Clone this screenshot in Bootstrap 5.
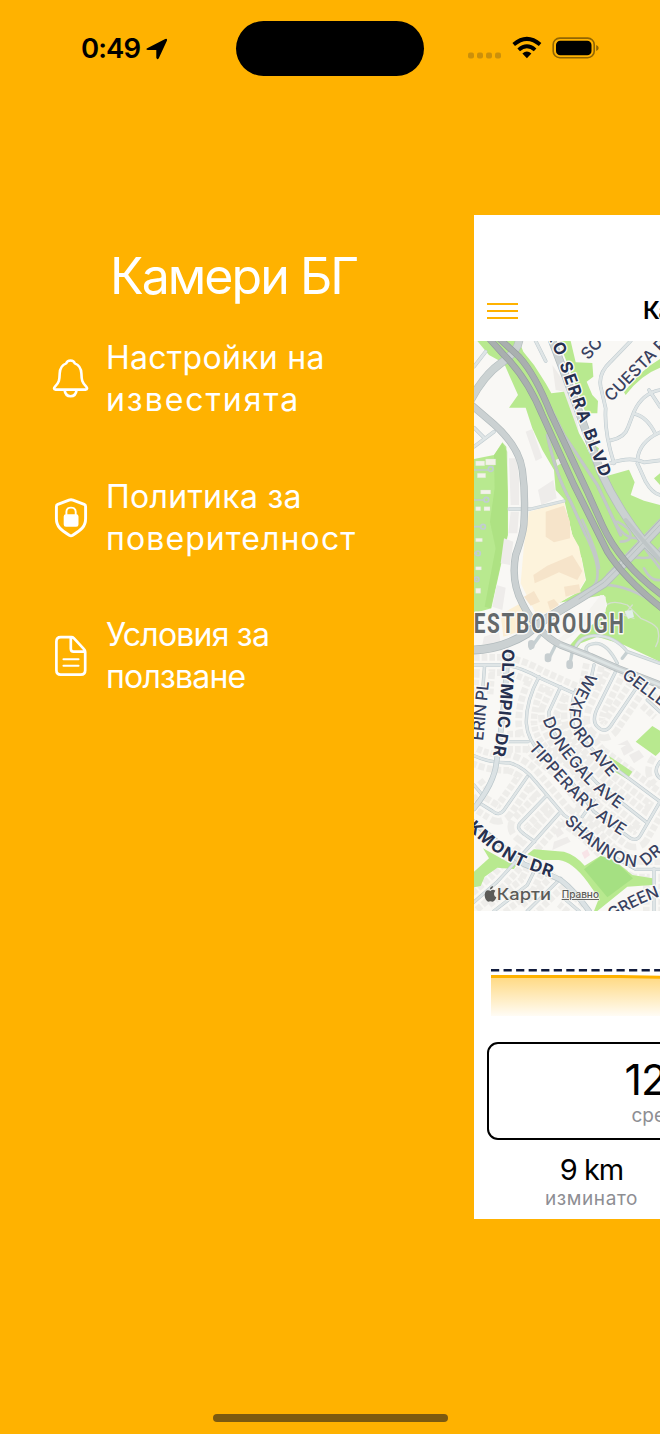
<!DOCTYPE html>
<html lang="bg">
<head>
<meta charset="utf-8">
<meta name="viewport" content="width=device-width, initial-scale=1">
<title>Камери БГ</title>
<link href="https://cdn.jsdelivr.net/npm/bootstrap@5.3.0/dist/css/bootstrap.min.css" rel="stylesheet">
<style>
html,body{height:1434px;overflow:hidden}
body{background:#ffb200;font-family:Inter,"Liberation Sans",sans-serif;color:#000}
.phone{width:660px;height:1434px}
.status{height:215px;padding:21px 61px 0 81px}
.status-row{height:55px}
.clock{font-size:27.5px;font-weight:600;line-height:57px;width:60px;flex:none;letter-spacing:-.9px}
.island{width:188px;height:55px;border-radius:28px;background:#000;margin-left:67px;flex:none}
.side{width:474px;padding:36px 0 0 51px}
.brand{font-size:50px;line-height:50px;padding-left:59px;letter-spacing:-1.95px;margin-bottom:36px}
.entry{gap:15px;height:84px;margin-bottom:54.5px;font-size:32px;line-height:42px}
.entry svg{width:40px;height:44px;flex:none;fill:none;stroke:#fff;stroke-width:2.6;stroke-linecap:round;stroke-linejoin:round}
.ls-a{letter-spacing:.28px}
.ls-b{letter-spacing:1.95px}
.ls-c{letter-spacing:1.1px}
.ls-d{letter-spacing:-.8px}
.stage{width:186px;height:1004px}
.bar-top{height:126px;padding:87px 0 0 12.5px}
.heading{font-size:24px;font-weight:600;line-height:18px;margin-left:125.5px;letter-spacing:-1.5px}
.map-area{height:570px}
.map-area>svg{display:block}
.chart{height:131px;padding-top:55px;padding-left:16px}
.metric{width:436px;height:98px;margin-left:12.5px;border:2px solid #000;border-radius:11px;padding:14px 0 0 136px}
.big{font-size:43px;line-height:42px;letter-spacing:-1px}
.note{font-size:19px;line-height:24px;color:#8e8e93;letter-spacing:.6px}
.metric .note{padding:4px 0 0 7px;letter-spacing:0}
.trip{width:231px;padding-top:12px;padding-left:4px}
.trip .note{line-height:22px}
.dist{font-size:29px;line-height:36px;letter-spacing:-1px}
.home-line{width:235px;height:8px;border-radius:4px;background:#7c5a10;margin-bottom:12px}
.r{fill:none;stroke-linejoin:round;stroke-linecap:round}
.lb text{font-size:49px;font-weight:500;fill:#384160;stroke:#faf9f7;stroke-width:8;paint-order:stroke;stroke-linejoin:round}
.lb text.hv{font-size:50px;font-weight:700;fill:#26304f}
</style>
</head>
<body>
<div class="phone d-flex flex-column overflow-hidden">
  <header class="status">
    <div class="status-row d-flex align-items-center">
      <span class="clock text-nowrap">0:49</span>
      <svg width="24" height="24" viewBox="0 0 24 24" class="ms-1 flex-shrink-0"><path d="M2.2 11.3 20.2 2Q22.6 1.2 22 3.6L13.8 21.2Q12.2 23.4 11.3 20.8V13H3Q.2 12.6 2.2 11.3Z"/></svg>
      <div class="island"></div>
      <svg width="134" height="30" viewBox="0 0 134 30" class="flex-shrink-0" style="margin-left:43px">
        <g fill="#cb900a"><rect x="1" y="18.5" width="6" height="6" rx="2"/><rect x="10" y="18.5" width="6" height="6" rx="2"/><rect x="19" y="18.5" width="6" height="6" rx="2"/><rect x="28" y="18.5" width="6" height="6" rx="2"/></g>
        <g transform="translate(.7 1.4)">
        <g fill="none" stroke="#000" stroke-width="3.9"><path d="M46 9.2Q59.2-2.2 72.4 9.2"/><path d="M51 14.5Q59.2 7.3 67.4 14.5"/></g>
        <path d="M54.7 18.2Q59.2 14 63.7 18.2L59.2 22.8Z"/>
        <rect x="85.5" y="2.7" width="41" height="19.6" rx="6.5" fill="none" stroke="#916503" stroke-width="1.6"/>
        <rect x="88.3" y="5.3" width="35.5" height="14.5" rx="4.3"/>
        <path d="M128.5 9.5Q131 10.5 131 12.5T128.5 15.6Z" fill="#916503"/>
        </g>
      </svg>
    </div>
  </header>
  <main class="d-flex">
    <nav class="side text-white">
      <div class="brand">Камери БГ</div>
      <div class="entry d-flex align-items-center">
        <svg viewBox="0 0 40 44"><path d="M19.5 3.5C17.3 3.5 15.7 4.8 15.2 6.4 11 8 8.9 11.6 8.7 16.5 8.5 23 8.2 25.2 4.2 29.4 2.5 31.2 2.7 32.6 4.6 32.6H34.6C36.4 32.6 36.6 31.2 35 29.4 31 25.2 30.6 23 30.4 16.5 30.2 11.6 28 8 23.8 6.4 23.3 4.8 21.7 3.5 19.5 3.5ZM13.6 33Q14.3 39.2 19.6 39.2T25.6 33"/></svg>
        <div><span class="ls-a">Настройки на</span><br><span class="ls-b">известията</span></div>
      </div>
      <div class="entry d-flex align-items-center">
        <svg viewBox="0 0 40 44"><path d="M18 4.2 6.8 8.4Q5.4 9 5.4 10.6V22.5C5.4 31 10 34 18.3 39.2Q20 40.2 21.7 39.2C30 34 34.6 31 34.6 22.5V10.6Q34.6 9 33.2 8.4L22 4.2Q20 3.4 18 4.2Z" stroke-width="2.9"/><rect x="14" y="19.5" width="12.2" height="10" rx="1" fill="#fff"/><path d="M15.4 19V15.7Q15.6 11.6 20 11.6T24.7 15.7V19" stroke-width="1.9"/></svg>
        <div><span class="ls-a">Политика за</span><br><span class="ls-c">поверителност</span></div>
      </div>
      <div class="entry d-flex align-items-center">
        <svg viewBox="0 0 40 44"><path d="M20.4 3.2H9.8Q5.4 3.2 5.4 7.6V36.3Q5.4 40.7 9.8 40.7H29.8Q34.2 40.7 34.2 36.3V18Q34.2 16.4 33 15.2L22.8 4.2Q21.8 3.2 20.4 3.2ZM19.8 3.8V14.7Q19.8 17.6 22.7 17.6H33.6" stroke-width="2.7"/><path d="M12.5 25.2H27.5M12.5 31.7H27.5" stroke-width="2.1"/></svg>
        <div><span class="ls-d">Условия за</span><br><span class="ls-d">ползване</span></div>
      </div>
    </nav>
    <section class="stage bg-white overflow-hidden">
      <div class="bar-top d-flex align-items-start">
        <svg width="31" height="18" viewBox="0 0 31 18" class="flex-shrink-0"><path d="M0 1.9H31M0 8.9H31M0 15.9H31" stroke="#ffb200" stroke-width="2"/></svg>
        <div class="heading text-nowrap">Камери</div>
      </div>
      <div class="map-area">
        <svg width="186" height="570" viewBox="30 18 558 1710">
          <defs>
            <g id="lanes">
              <path d="M30 990H110Q160 990 230 1030L330 1075M225 1025Q185 1100 187 1165 190 1215 235 1260L300 1310 345 1370 390 1430 500 1510Q520 1520 530 1500L588 1400M290 1055 255 1130Q250 1190 335 1275L400 1345 545 1460M335 1065Q310 1140 335 1185L400 1260 588 1400M460 1000 405 1110Q380 1155 400 1175 425 1200 445 1165L530 1040M130 1220H192M30 1262Q80 1285 135 1283 180 1295 215 1340L300 1440 370 1490 440 1560 515 1603H588M190 1325 120 1425Q105 1445 85 1428L40 1400M245 1385 168 1465Q155 1480 180 1497L212 1520M290 1430 210 1520 100 1640 20 1710M30 1350 55 1380M355 1445 390 1395M570 1600V1728M90 1728 190 1650 215 1600M190 1728 290 1630M345 1728 300 1690M62 990 55 1080M390 990 375 1060M588 1280Q565 1310 588 1330M550 1095 588 1130"/>
            </g>
            <g id="hills">
              <path d="M500 18 440 80Q402 115 410 155L425 220Q420 290 450 385M440 316Q482 308 492 277L510 230Q535 175 588 165M510 236Q550 245 575 298M520 375Q525 320 588 292M440 384Q500 363 540 382L588 376M520 385 545 440Q565 475 588 480M555 165 588 215M215 18 245 78M30 95 65 50M30 335 90 290M30 278 60 308"/>
            </g>
            <path id="west" d="M20 208 90 268Q165 335 175 405T180 560Q180 590 155 660 140 740 175 805 220 895 290 930L380 965 460 1000 588 1050"/>
            <path id="junip" d="M20 945Q110 945 190 895L240 855 340 795 420 745 500 665 600 560"/>
            <path id="fwyA" d="M75 10 120 60Q190 130 235 240L330 450 385 560 430 650Q480 730 600 825"/>
            <path id="fwyB" d="M105 10 165 65Q215 120 260 235L370 470 415 570Q470 690 600 785"/>
            <path id="serra" d="M262 10 330 190 410 410Q460 520 540 620L600 680"/>
            <path id="p1" d="M263 -12 290 45Q320 130 350 215T430 428"/>
            <path id="p2" d="M360 65 440 -25"/>
            <path id="p3" d="M430 190 620 -2"/>
            <path id="p4" d="M133 942Q132 1110 104 1266"/>
            <path id="p5" d="M40 1216 58 1038"/>
            <path id="p6" d="M385 1020Q350 1080 333 1125 325 1165 350 1197L457 1324"/>
            <path id="p7" d="M252 1147Q275 1215 335 1282 380 1345 478 1412"/>
            <path id="p8" d="M205 1228 300 1335Q380 1425 485 1490"/>
            <path id="p9" d="M312 1448Q390 1530 450 1560 505 1588 545 1572L598 1530"/>
            <path id="p10" d="M482 1013 610 1107"/>
            <path id="p11" d="M22 1466Q100 1545 180 1580L275 1612"/>
            <path id="p12" d="M436 1742Q500 1695 610 1658"/>
          </defs>
          <rect x="30" y="18" width="558" height="1710" fill="#f9f8f5"/>
          <g fill="none" stroke="#eeedea">
            <use href="#lanes" stroke-width="66" stroke-dasharray="17 6"/>
            <use href="#lanes" stroke="#f9f8f5" stroke-width="26"/>
          </g>
          <path d="M265 90 320 170 345 290 325 250 300 170 275 165Z" fill="#eeece9"/>
          <g fill="#b8e98f">
            <path d="M40 18H165L178 50 210 90 245 145 262 175 300 170 325 240 345 295 365 330 410 428 495 404 512 442 500 480 540 497 588 510V980L480 930 400 905 350 925 330 950 308 942 345 900 415 845 430 810 420 780 285 803 345 770 366 735 353 670 325 600 300 492 275 465 270 405 235 345 205 280 185 218H135L162 180 120 85 75 60Z"/>
            <path d="M288 18H320L335 82 385 84 388 125 368 140 385 180 402 198 400 235 365 235 335 150 300 60Z"/>
            <path d="M480 172Q530 105 588 72V98Q530 120 485 180ZM588 415 570 430 588 450ZM378 320 405 340 395 370Z"/>
            <path d="M30 372 90 360 115 322 127 335 132 470V600L122 640 82 820 30 835Z"/>
            <path d="M57 1540 135 1583 160 1585 150 1602 100 1598 62 1625 50 1653 30 1657V1610L75 1570ZM190 1558 210 1543 300 1550Q335 1560 362 1592L410 1562 450 1575 505 1620 565 1630V1650L490 1655 400 1728H390L405 1690 370 1640Q325 1580 285 1575H235ZM515 1220 565 1173 588 1187V1250L575 1263ZM435 1263 505 1310 490 1333 455 1312Z"/>
          </g>
          <path d="M90 360 115 325 130 350V600L80 820 62 815 95 640 78 560 92 460Z" fill="#a4dc78" opacity=".5"/>
          <path d="M360 1603 410 1564 455 1580 507 1630 430 1687Z" fill="#a5e082"/>
          <path d="M195 530 300 500 325 600 345 635 353 675 364 735 345 765 285 805 260 835 215 835 170 745 180 630Z" fill="#fdf3dc"/>
          <path d="M110 838 170 805 210 850 195 880 118 905Z" fill="#fcefd3"/>
          <g fill="#f6e4ca"><path d="M245 530 300 512 318 560V610L270 622 245 605Z"/><path d="M208 720 250 692 325 660 355 708 340 735 285 712 250 728 212 745Z"/><path d="M300 755 345 748 350 772 305 785ZM250 800 270 792 285 810 258 825ZM180 785 210 768 228 800 200 812Z"/></g>
          <g fill="#eeecea"><path d="M185 290 205 282 235 368 215 378ZM222 465 268 435 278 490 232 510ZM140 530H165L160 595H133ZM120 610 148 620 138 690 110 685ZM98 750 125 758 115 825 85 815ZM60 905 105 890 110 925 55 930ZM275 375 295 365 300 380 280 392ZM285 1475 300 1495 280 1508 272 1490ZM270 1520 310 1505 320 1520 265 1545ZM470 1240 495 1225 510 1245 480 1262ZM495 1260 525 1245 540 1265 510 1285ZM460 1230 490 1215 500 1230ZM135 370H158L165 430V510H140Z"/></g>
          <g fill="#f3f2e9" stroke="#d9e3c8" stroke-width="1">
            <path d="M35 378H62V392H35ZM65 372H95V390H65ZM40 415H65V428H40ZM50 465H80V477H50ZM35 515H50V527H35ZM60 515H78V527H60ZM35 610H55V620H35ZM35 695H52V705H35ZM35 760H50V775H35Z"/>
          </g>
          <g class="r" stroke="#c1cdd1" stroke-width="5"><path d="M30 405H72M30 495H60M30 575H50M30 655H38M30 733H38"/><circle cx="80" cy="402" r="7"/><circle cx="67" cy="494" r="7"/><circle cx="57" cy="575" r="7"/><circle cx="42" cy="655" r="7"/><circle cx="38" cy="733" r="7"/></g>
          <path d="M345 865 410 780 425 785 425 830 290 925 275 918Z" fill="#f4f3ef"/>
          <g class="r">
            <g stroke="#bdc9ce"><use href="#lanes" stroke-width="10"/><use href="#hills" stroke-width="11"/></g>
            <g stroke="#dfe5e6"><use href="#lanes" stroke-width="7"/><use href="#hills" stroke-width="8"/></g>
            <path d="M330 950Q340 905 390 902 450 900 490 950L588 985M375 960Q350 930 395 925 430 925 460 985M240 885 200 940M275 930 255 970M325 950 317 990M135 522H200L300 498M490 950 475 970" stroke="#c6d0d2" stroke-width="10"/>
            <path d="M330 950Q340 905 390 902 450 900 490 950L588 985M375 960Q350 930 395 925 430 925 460 985M135 522H200L300 498" stroke="#dce3e4" stroke-width="6"/>
            <path d="M202 932V925M252 972V965M317 992V985" stroke="#c7ced0" stroke-width="20"/>
            <path d="M130 955Q125 1100 97 1285 90 1345 30 1420M20 1455 180 1588Q260 1620 290 1635 330 1665 375 1728" stroke="#bac6ca" stroke-width="17"/>
            <path d="M130 955Q125 1100 97 1285 90 1345 30 1420M20 1455 180 1588Q260 1620 290 1635 330 1665 375 1728" stroke="#dbe2e4" stroke-width="13"/>
            <path d="M20 195Q60 120 110 85T165 18" stroke="#b6bfc0" stroke-width="25"/><path d="M20 195Q60 120 110 85T165 18" stroke="#ccd3d3" stroke-width="21"/>
            <path d="M245 190Q270 240 300 300L400 450 470 600M250 300Q275 420 320 500L365 600" stroke="#b9c0c1" stroke-width="9"/>
            <path d="M245 190Q270 240 300 300L400 450 470 600M250 300Q275 420 320 500L365 600Q415 700 395 745 370 780 330 795M355 555Q400 650 405 700M405 750Q490 745 588 815M450 555Q475 610 520 610L588 700M460 560Q500 580 500 600T470 620M500 665Q580 680 588 640M540 700Q560 740 588 735M588 555 430 720" stroke="#c3c8c9" stroke-width="8"/>
            <path d="M430 808Q450 795 490 810L530 850Q570 865 580 880 590 910 575 935M505 810 480 840 510 850" stroke="#d4dfce" stroke-width="4"/>
            <g stroke="#b1babc"><use href="#serra" stroke-width="25"/><use href="#west" stroke-width="22"/><use href="#junip" stroke-width="27"/></g>
            <g stroke="#cbd1d2"><use href="#serra" stroke-width="21"/><use href="#west" stroke-width="18"/><use href="#junip" stroke-width="22"/></g>
            <path d="M290 930 380 965 460 1000 588 1050" stroke="#dde4e4" stroke-width="8"/>
            <path d="M345 792 420 742 500 662 600 557" stroke="#b0b9ba" stroke-width="2"/>
            <g stroke="#949c9d" stroke-width="20"><use href="#fwyA"/><use href="#fwyB"/></g>
            <g stroke="#a9afaf" stroke-width="16"><use href="#fwyA"/><use href="#fwyB"/></g>
            <path d="M485 555 600 690" stroke="#bfc6c7" stroke-width="12"/>
          </g>
          <path d="M482 828 505 825 510 845 492 852Z" fill="#e1efe9"/>
          <path d="M353 1553 370 1543 378 1560 362 1572Z" fill="#f8e4e7"/>
          <g class="lb">
            <text class="hv"><textPath href="#p1" textLength="464"><tspan dy="18">RO SERRA BLVD</tspan></textPath></text>
            <text><textPath href="#p2"><tspan dy="17">SO</tspan></textPath></text>
            <text><textPath href="#p3"><tspan dy="17">CUESTA P</tspan></textPath></text>
            <text class="hv"><textPath href="#p4" textLength="324"><tspan dy="18">OLYMPIC DR</tspan></textPath></text>
            <text><textPath href="#p5" textLength="178"><tspan dy="17">ERIN PL</tspan></textPath></text>
            <text><textPath href="#p6" textLength="350"><tspan dy="17">WEXFORD AVE</tspan></textPath></text>
            <text><textPath href="#p7" textLength="348"><tspan dy="17">DONEGAL AVE</tspan></textPath></text>
            <text><textPath href="#p8" textLength="382"><tspan dy="17">TIPPERARY AVE</tspan></textPath></text>
            <text><textPath href="#p9" textLength="330"><tspan dy="17">SHANNON DR</tspan></textPath></text>
            <text><textPath href="#p10"><tspan dy="17">GELLE</tspan></textPath></text>
            <text class="hv"><textPath href="#p11" textLength="288"><tspan dy="18">KMONT DR</tspan></textPath></text>
            <text><textPath href="#p12"><tspan dy="17">GREEN</tspan></textPath></text>
            <text x="29" y="895" textLength="456" lengthAdjust="spacingAndGlyphs" style="font:700 84px Roboto,sans-serif;letter-spacing:7px;fill:#64696b;stroke-width:9">ESTBOROUGH</text>
          </g>
          <g fill="#5b5b58" stroke="#f7f7f3" stroke-width="3" paint-order="stroke">
            <path d="M79 1668Q87 1661 94 1667 89 1673 90 1678 91 1685 97 1687 92 1700 86 1700 79 1697 72 1700 62 1694 62 1680 64 1661 79 1668ZM78 1663Q78 1655 87 1653 87 1662 78 1663Z" stroke="none"/>
            <text x="98" y="1695" font-size="48" font-weight="500" textLength="163" lengthAdjust="spacingAndGlyphs">Карти</text>
            <text x="293" y="1689" font-size="29" font-weight="500" textLength="112" lengthAdjust="spacingAndGlyphs" text-decoration="underline">Правно</text>
          </g>
        </svg>
      </div>
      <div class="chart">
        <svg width="170" height="52" viewBox="0 0 170 52" class="d-block">
          <defs><linearGradient id="fade" x2="0" y2="1"><stop stop-color="#ffb200" stop-opacity=".5"/><stop offset="1" stop-color="#ffb200" stop-opacity=".04"/></linearGradient></defs>
          <path d="M1 10H170V50H1Z" fill="url(#fade)"/>
          <path d="M1 10.5H130L170 11.3" fill="none" stroke="#ffb200" stroke-width="3"/>
          <path d="M1 4.2H170" stroke="#121c3d" stroke-width="2.6" stroke-dasharray="8.2 4.35"/>
        </svg>
      </div>
      <div class="metric">
        <div class="big">12</div>
        <div class="note">сре</div>
      </div>
      <div class="trip text-center">
        <div class="dist">9 km</div>
        <div class="note">изминато</div>
      </div>
    </section>
  </main>
  <footer class="d-flex justify-content-center mt-auto"><div class="home-line"></div></footer>
</div>
<script src="https://cdn.jsdelivr.net/npm/bootstrap@5.3.0/dist/js/bootstrap.bundle.min.js"></script>
</body>
</html>
